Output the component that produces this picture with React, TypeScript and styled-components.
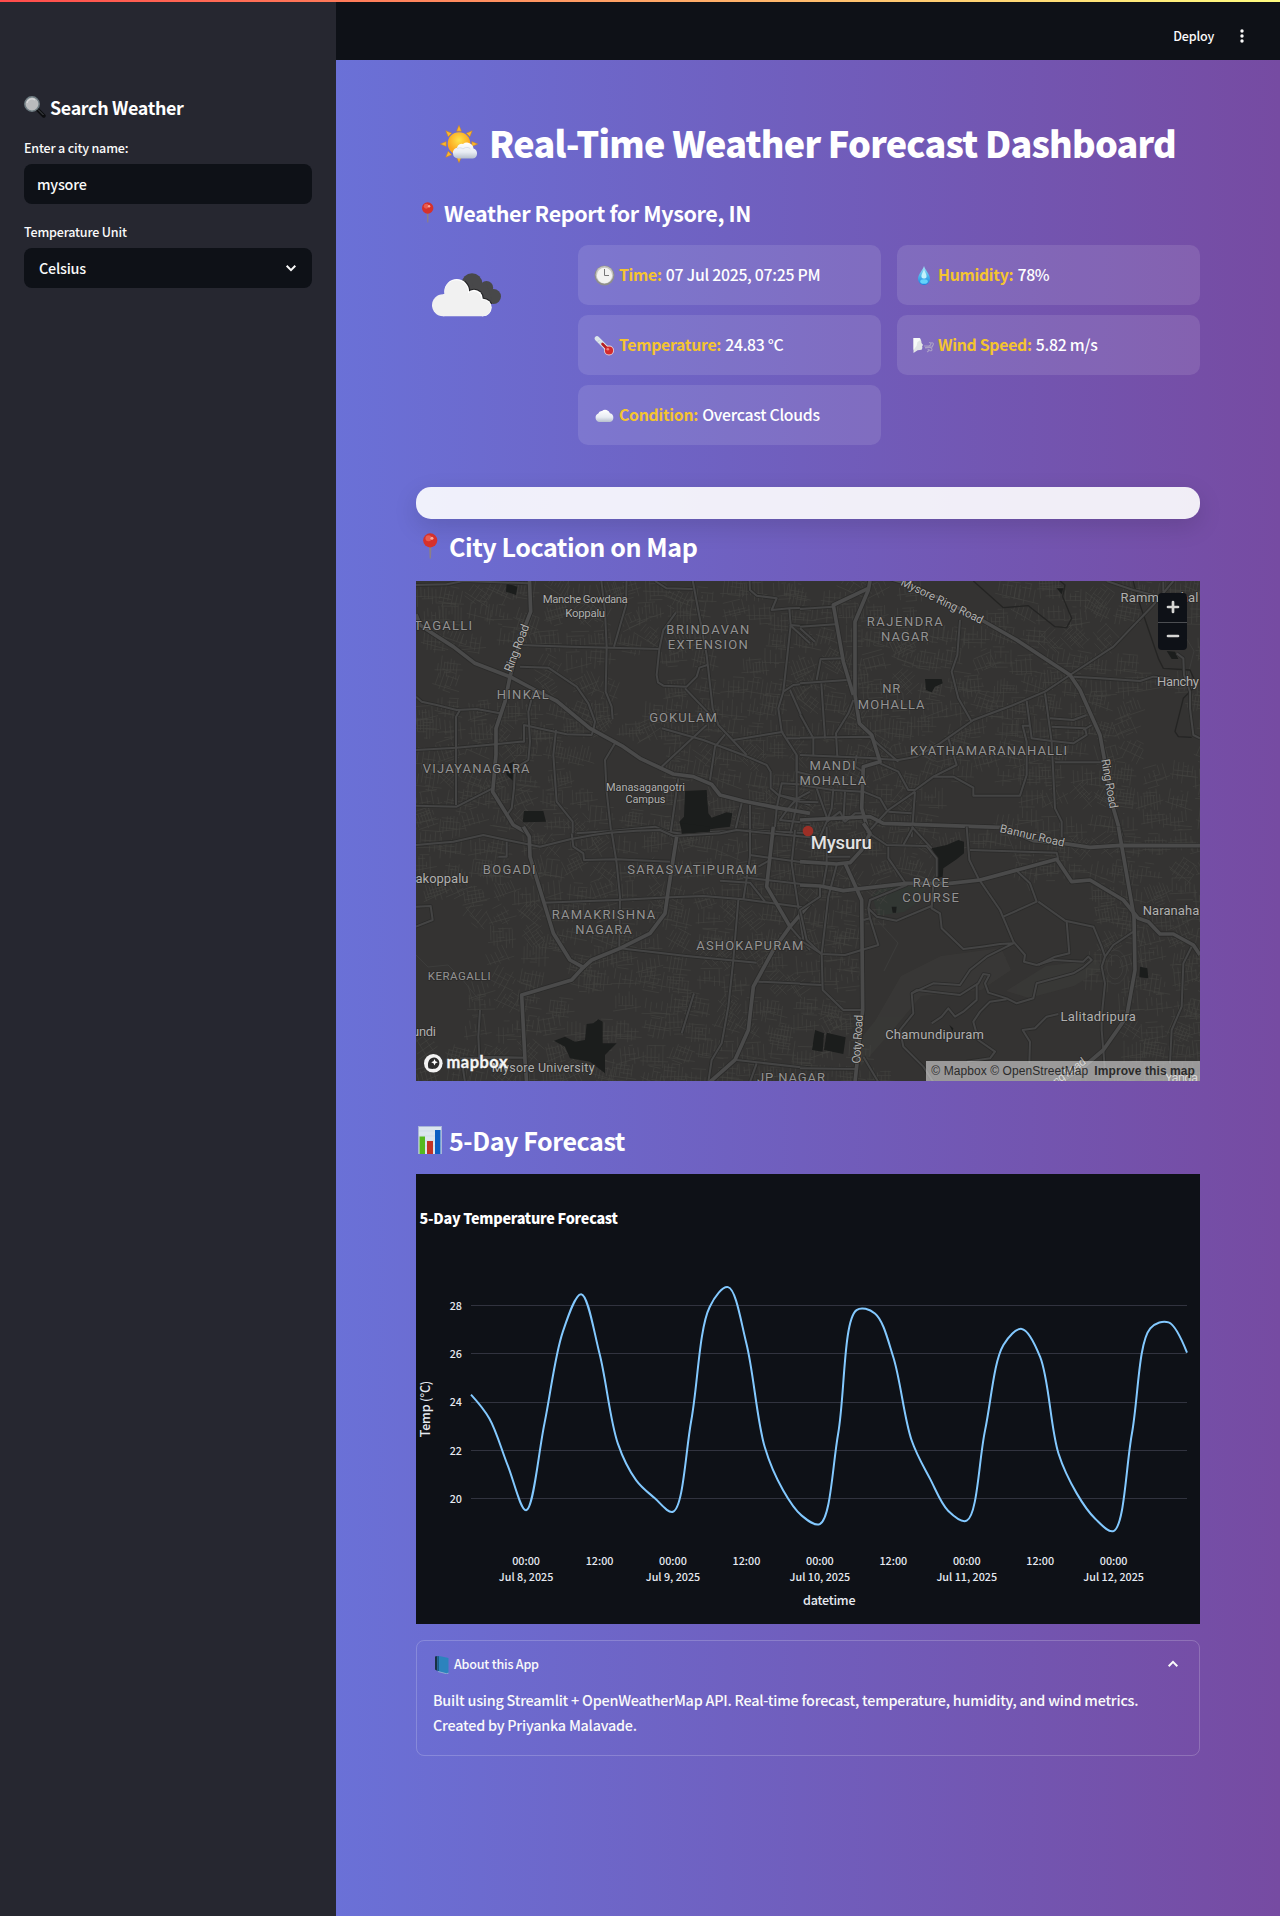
import React from "react";
import styled, { createGlobalStyle } from "styled-components";

const sans = `"Noto Sans CJK SC", "Noto Sans", sans-serif`;

const GlobalStyle = createGlobalStyle`
  *, *::before, *::after { box-sizing: border-box; }
  body { margin: 0; background: #0e1117; font-family: ${sans}; color: #fafafa; }
  h1, h2, h3, p { margin: 0; }
`;

/* ---------- page frame ---------- */

const Page = styled.div`
  position: relative;
  display: flex;
  width: 1280px;
  height: 1916px;
  overflow: hidden;
  background: linear-gradient(to right, #667eea, #764ba2);
  letter-spacing: -0.0135em;
`;
const Decoration = styled.div`
  position: absolute;
  z-index: 2;
  inset: 0 0 auto 0;
  height: 2px;
  background: linear-gradient(to right, #ff4b4b, #fffd80);
`;
const Sidebar = styled.aside`
  display: flex;
  flex-direction: column;
  width: 336px;
  flex: none;
  padding: 94px 24px 0;
  background: #262730;
`;
const SidebarTitle = styled.h3`
  display: flex;
  align-items: flex-start;
  gap: 4px;
  height: 28px;
  font-size: 17.9px;
  font-weight: 700;
  line-height: 26px;
  letter-spacing: -0.019em;
  color: #fff;
`;
const Field = styled.div<{ $top: number }>`
  display: flex;
  flex-direction: column;
  gap: 5px;
  margin-top: ${(p) => p.$top}px;
`;
const FieldLabel = styled.span`
  height: 21px;
  line-height: 19px;
  font-size: 12.55px;
  font-weight: 500;
  letter-spacing: -0.015em;
`;
const FieldBox = styled.div<{ $inset: number }>`
  display: flex;
  align-items: center;
  justify-content: space-between;
  height: 40px;
  padding: 0 14px 0 ${(p) => p.$inset}px;
  border-radius: 8px;
  background: #0e1117;
  font-size: 14.35px;
  font-weight: 500;
  line-height: 24px;
`;
const Content = styled.div`
  display: flex;
  flex-direction: column;
  flex: 1;
  min-width: 0;
`;
const Header = styled.header`
  display: flex;
  align-items: center;
  justify-content: flex-end;
  gap: 20px;
  height: 60px;
  padding: 12px 30px 0 0;
  background: #0e1117;
  font-size: 12.55px;
  font-weight: 500;
`;
const Raised = styled.span`
  padding-bottom: 2px;
`;
const Main = styled.main`
  display: flex;
  flex-direction: column;
  padding: 52px 80px 0;
`;

/* ---------- headings ---------- */

const Glyph = styled.span<{ $top: number; $left?: number }>`
  display: block;
  margin: ${(p) => p.$top}px 0 0 ${(p) => p.$left ?? 0}px;
  line-height: 0;
`;
const Title = styled.h1`
  display: flex;
  align-items: flex-start;
  justify-content: center;
  gap: 10px;
  height: 64px;
  font-size: 36px;
  font-weight: 800;
  line-height: 61px;
  letter-spacing: -0.0215em;
  color: #fff;
  white-space: nowrap;
`;
const Heading = styled.h2<{ $size: number; $height: number; $line: number; $gap: number; $top?: number; $bottom?: number }>`
  display: flex;
  align-items: flex-start;
  gap: ${(p) => p.$gap}px;
  height: ${(p) => p.$height}px;
  margin: ${(p) => p.$top ?? 0}px 0 ${(p) => p.$bottom ?? 0}px;
  font-size: ${(p) => p.$size}px;
  font-weight: 700;
  line-height: ${(p) => p.$line}px;
  letter-spacing: -0.018em;
  color: #fff;
  white-space: nowrap;
`;

/* ---------- weather report ---------- */

const Report = styled.section`
  display: grid;
  grid-template-columns: 146px 303px 303px;
  column-gap: 16px;
  height: 242px;
`;
const IconCell = styled.div`
  padding: 28px 0 0 16px;
`;
const CardColumn = styled.div`
  display: flex;
  flex-direction: column;
  gap: 10px;
`;
const Card = styled.div`
  display: flex;
  align-items: center;
  height: 60px;
  padding: 0 16px;
  border-radius: 10px;
  background: rgba(255, 255, 255, 0.11);
  font-size: 15.8px;
  letter-spacing: -0.0175em;
  white-space: pre;
  color: #fff;
`;
const CardLabel = styled.b`
  margin: 0 4px;
  padding-bottom: 2px;
  color: #f4c430;
  font-weight: 700;
`;
const CardValue = styled.span`
  padding-bottom: 2px;
  font-weight: 500;
`;
const Strip = styled.div`
  height: 32px;
  border-radius: 15px;
  background: rgba(255, 255, 255, 0.9);
  box-shadow: 0 8px 24px rgba(0, 0, 0, 0.13);
`;

/* ---------- map ---------- */

const MapFrame = styled.div`
  position: relative;
  height: 500px;
  overflow: hidden;
  background: #343332;
  letter-spacing: 0;
`;
const ZoomControl = styled.div`
  position: absolute;
  top: 12px;
  right: 13px;
  display: flex;
  flex-direction: column;
  width: 29px;
  border-radius: 4px;
  background: #0e1117;
`;
const ZoomButton = styled.div`
  display: grid;
  place-items: center;
  height: 28.5px;
  & + & { border-top: 1px solid #4c4e52; }
`;
const Attribution = styled.div`
  position: absolute;
  right: 0;
  bottom: 0;
  display: flex;
  gap: 6px;
  height: 20px;
  padding: 0 5px;
  background: rgba(255, 255, 255, 0.5);
  color: #2b2b2b;
  font: 12px/20px "Liberation Sans", sans-serif;
  letter-spacing: 0.08px;
  white-space: nowrap;
`;

/* ---------- chart and expander ---------- */

const ChartFrame = styled.div`
  height: 450px;
  background: #0e1117;
  letter-spacing: 0;
  svg { display: block; }
`;
const Expander = styled.section`
  height: 116px;
  margin-top: 16px;
  padding: 0 16px;
  border: 1px solid rgba(250, 250, 250, 0.2);
  border-radius: 8px;
`;
const ExpanderHead = styled.div`
  display: flex;
  align-items: center;
  height: 46px;
  padding: 0 3px 0 1px;
  gap: 4px;
  font-size: 12.55px;
  font-weight: 500;
  svg:last-child { margin-left: auto; }
`;
const ExpanderBody = styled.p`
  font-size: 14.35px;
  font-weight: 500;
  line-height: 25px;
  white-space: nowrap;
`;

/* ---------- emoji drawings ---------- */

const Magnifier = () => (
  <svg width="22" height="22" viewBox="0 0 22 22">
    <path d="M13.500 13.500l6.300 6.300" stroke="#0d0e10" strokeWidth="3.800" strokeLinecap="round" />
    <path d="M14 13.500l5.500 5.500" stroke="#4a4e53" strokeWidth="1" />
    <circle cx="8" cy="8" r="7.200" fill="#b9bbbd" stroke="#6e7c82" strokeWidth="1.500" />
    <path d="M3 7a5 5 0 0 1 8-3" stroke="#d8dadb" strokeWidth="1.300" fill="none" />
  </svg>
);
const SunCloud = () => (
  <svg width="39" height="38" viewBox="0 0 39 38">
    <defs>
      <radialGradient id="sun" cx="50%" cy="35%"><stop offset="0" stopColor="#ffe34a" /><stop offset="1" stopColor="#fba51e" /></radialGradient>
      <linearGradient id="puff" x1="0" y1="0" x2="0" y2="1"><stop offset="0" stopColor="#fff" /><stop offset=".6" stopColor="#e8ecf3" /><stop offset="1" stopColor="#b6bfcd" /></linearGradient>
    </defs>
    {[0, 45, 90, 135, 180, 225, 270, 315].map((a) => (
      <path key={a} d="M16.500 6.200L19 .3l2.500 5.900z" fill="#fcb52b" stroke="#c98320" strokeWidth=".5" transform={`rotate(${a} 19 19)`} />
    ))}
    <circle cx="19" cy="18.500" r="11.300" fill="url(#sun)" />
    <path d="M18 33.500a5.500 5.500 0 0 1-1-10.800 5 5 0 0 1 6-3.700 6.500 6.500 0 0 1 10.500 4.500 5.200 5.200 0 0 1-.5 10z" fill="url(#puff)" />
    <path d="M17 24c2-2 5-1 6 0 2-2 6-2 7.500 0" stroke="#d3d9e3" strokeWidth=".8" fill="none" />
  </svg>
);
const Pin = ({ size }: { size: number }) => (
  <svg width={size} height={size} viewBox="0 0 24 24">
    <path d="M11 11h2.400l-.5 12.500h-1.200z" fill="#8d7f86" />
    <circle cx="12.200" cy="6.800" r="6.500" fill="#d6312b" />
    <circle cx="10.600" cy="4.800" r="2.800" fill="#ea5c50" />
    <circle cx="13.800" cy="4.800" r="1.400" fill="#f9a79d" />
  </svg>
);
const Bars = () => (
  <svg width="24" height="28" viewBox="0 0 24 28">
    <path d="M0 0h24v28H0z" fill="#a9b6d8" />
    <path d="M1 1h22v27H1z" fill="#dbe6ee" />
    <path d="M1 5h22M1 10h22M1 15h22M1 20h22" stroke="#cbd9e6" strokeWidth=".6" />
    <path d="M1.500 10.500h5.500V28H1.500z" fill="#55b91e" />
    <path d="M9 15h6v13H9z" fill="#c23325" />
    <path d="M17 4h5.500v24H17z" fill="#0a5ec2" />
  </svg>
);
const Clock = () => (
  <svg width="21" height="21" viewBox="0 0 21 21">
    <circle cx="10.500" cy="10.500" r="10" fill="#8e8e8a" />
    <circle cx="10.500" cy="9.800" r="8.900" fill="#c5c5c1" />
    <circle cx="10.500" cy="10.500" r="7.700" fill="#f3f3f1" />
    <path d="M10.500 4v6.500H15" stroke="#777" strokeWidth="1" fill="none" />
  </svg>
);
const Thermometer = () => (
  <svg width="21" height="21" viewBox="0 0 21 21">
    <path d="M3 3.500l11.500 11.500" stroke="#dce6ea" strokeWidth="4.600" strokeLinecap="round" />
    <circle cx="15" cy="15.500" r="5" fill="#e8cfd2" />
    <path d="M8.500 9l6.500 6.500" stroke="#b51e22" strokeWidth="2.600" strokeLinecap="round" />
    <circle cx="15" cy="15.500" r="4.100" fill="#d42a2c" />
    <circle cx="13.800" cy="14.300" r="1.300" fill="#f08179" />
    <path d="M4 6.500l1-1M6 8.500l1-1" stroke="#8ea0a8" strokeWidth=".7" />
  </svg>
);
const Cloud = () => (
  <svg width="21" height="21" viewBox="0 0 21 21">
    <path d="M5 17a4.500 4.500 0 0 1-.7-8.500A3.500 3.500 0 0 1 8 5.900a5.200 5.200 0 0 1 8 2.400A4.500 4.500 0 0 1 16 17z" fill="url(#puff)" />
  </svg>
);
const Drop = () => (
  <svg width="21" height="21" viewBox="0 0 21 21">
    <defs><linearGradient id="drop" x1="0" y1="0" x2="0" y2="1"><stop offset="0" stopColor="#a6e5f7" /><stop offset=".55" stopColor="#49b5ec" /><stop offset="1" stopColor="#1b7fe0" /></linearGradient></defs>
    <path d="M11 1c1 4 6 8 6 13a6 6 0 0 1-12 0c0-5 5-9 6-13z" fill="url(#drop)" />
    <path d="M11 4c.5 3 3 5 2.500 8-.5 2-4.500 2-5 0-.5-3 2-5 2.500-8z" fill="#c4f2fb" />
    <ellipse cx="11" cy="16.500" rx="3.800" ry="2.300" fill="#64d3fa" />
  </svg>
);
const WindFace = () => (
  <svg width="21" height="21" viewBox="0 0 21 21">
    <path d="M.5 3h6.500l1.300 3 .2 2 1.600 2-1 1 .3 2-.8 1.800-4 .4L.5 18z" fill="#e3e6e6" />
    <path d="M.5 3h6l1 2-3 2-1 4-3 4z" fill="#f8faf9" />
    <path d="M11 11h5c3-1 2-4 0-3.500M12 13c4-1 7-1 7 1.500 0 2-3 1.500-2.500 0M12 12.500l8-.8M15 14c1 2 0 3-1 2.500M18 8c3-1 3 2 1 3" stroke="#aaa0c6" strokeWidth="1.100" fill="none" />
  </svg>
);
const Book = () => (
  <svg width="16" height="19" viewBox="0 0 16 19">
    <path d="M1 1.500L3.500 1v15L1 14.500z" fill="#173143" />
    <path d="M3.500 1l3 .2L14.500 3v15l-2.500.5-8.500-2.500z" fill="#2c83bd" />
    <path d="M3.500 1L5 1.300v15L3.500 16z" fill="#1b5c8a" />
    <path d="M4 16.500l8.500 2.200 2-.6" stroke="#a4c4d3" strokeWidth=".7" fill="none" />
  </svg>
);
const BrokenClouds = () => (
  <svg width="70" height="44" viewBox="0 0 70 44">
    <defs><clipPath id="rim"><path d="M33 5h27v26H33z" /></clipPath></defs>
    <g fill="#48484a">
      <circle cx="40" cy="10.500" r="10.300" /><circle cx="54.500" cy="14.700" r="6.700" /><circle cx="61.500" cy="23.500" r="7.500" />
      <path d="M40 10h14l7 20H48z" />
    </g>
    <g fill="#232325" clipPath="url(#rim)">
      <circle cx="24.700" cy="18.500" r="13.600" /><circle cx="42" cy="25.500" r="9.800" /><circle cx="51" cy="34.500" r="9.800" />
    </g>
    <g fill="#fff">
      <circle cx="24.700" cy="18.500" r="12.400" /><circle cx="42" cy="25.500" r="8.700" /><circle cx="51" cy="34.500" r="8.700" />
    </g>
    <g fill="#f1f1f1">
      <circle cx="24.300" cy="19" r="11.800" /><circle cx="41.500" cy="26.200" r="8" /><circle cx="50.800" cy="35" r="8.200" /><circle cx="11" cy="32.300" r="11" />
      <path d="M11 21.300l20-4 12 10 8 16H11z" />
    </g>
  </svg>
);
const Chevron = ({ up }: { up?: boolean }) => (
  <svg width="14" height="14" viewBox="0 0 14 14">
    <path d={up ? "M2.700 9.200L7 4.900l4.300 4.300" : "M2.700 4.800L7 9.100l4.300-4.300"} fill="none" stroke="#fafafa" strokeWidth="2" />
  </svg>
);
const Kebab = () => (
  <svg width="16" height="16" viewBox="0 0 16 16" fill="#fafafa">
    <circle cx="8" cy="3" r="1.700" /><circle cx="8" cy="8" r="1.700" /><circle cx="8" cy="13" r="1.700" />
  </svg>
);

/* ---------- map data: four tiles at three units per pixel ---------- */

type Tile = { x: number; y: number; major: string[]; minor: string[]; water: string[]; edge?: string[] };

const tiles: Tile[] = [
  {
    x: -6, y: -6,
    major: [
      "18,118 30,150 75,180 130,215 195,265 300,305 375,345 440,378 540,460 640,515 690,550 790,597 850,605 905,628 930,660 1000,678 1100,698 1200,715",
      "358,0 362,110 335,180 300,305 285,380 258,460 258,540 248,650 310,750 345,770 360,786",
    ],
    minor: [
      "330,210 480,215 750,222", "572,0 585,110 590,215 587,350 605,395 608,432", "650,0 648,90 612,215",
      "798,112 760,165 748,222 740,300 744,322 760,332 830,335 860,305 868,278 892,270",
      "845,0 890,240 908,400 925,450 1010,540", "825,340 925,445",
      "330,275 415,278 500,335 535,385 555,440 550,465",
      "755,460 880,495 1000,540 1070,570 1082,590 1082,640 1105,660 1200,680", "890,450 755,575",
      "945,478 915,515 900,615", "970,495 1060,480 1120,470",
      "1200,325 1150,330 1120,350 1105,400 1115,470 1160,540 1160,590 1200,600", "1160,540 1160,690 1140,780",
      "1120,350 1130,260 1142,150 1138,100", "1142,150 1200,155", "1140,150 1200,205", "1140,345 1200,480", "1130,490 1200,490",
      "1018,0 1020,45 1040,62 1100,70 1085,105 1138,100 1200,98", "735,18 770,40 848,42",
      "18,365 35,380 80,390 140,405 200,402 270,415",
      "18,525 140,518 255,508 330,500 342,500 342,450 410,465 470,478 545,480 550,465",
      "150,405 138,425 138,690", "18,692 140,695 248,640",
      "370,350 355,410 360,500 355,555 315,580 312,640 305,700 290,720",
      "438,465 430,540 440,680 488,740 488,786", "615,505 585,555 590,650 605,786",
      "500,775 600,768 735,755 770,770 818,776 1000,765 1200,775", "805,610 780,786",
      "995,685 975,770", "1020,690 1020,786", "1200,630 1115,625 1100,700 1092,786", "1105,660 1200,690",
      "18,30 110,28 160,18 355,25", "1200,650 1160,672 1135,700 1110,735 1200,745",
    ],
    water: [
      "290,25 322,35 318,60 288,50", "285,570 312,560 312,620 290,600", "342,708 400,708 408,740 338,742",
      "825,648 890,645 895,715 905,728 950,712 967,715 960,755 920,760 818,776 808,740 822,725",
    ],
  },
  {
    x: 384, y: -6,
    major: [
      "270,10 320,25 420,70 550,138 650,195 810,300 840,345 900,480 940,700 965,786",
      "210,18 205,45 165,140 165,360 178,445 215,480 240,560 190,575 185,700 210,786",
      "205,40 100,90 130,260 160,360", "0,735 210,725 250,745 600,757",
    ],
    minor: [
      "1120,18 1060,90 940,215 810,300 735,350 640,390 520,435 420,505 350,545 295,555 210,550",
      "0,102 100,95", "0,155 105,148", "0,160 45,200", "0,325 140,315", "64,325 75,490", "50,315 62,252 125,250",
      "160,375 145,415 108,475 112,545", "0,418 40,490 40,540", "0,488 210,485 260,530 295,560", "0,540 230,550",
      "240,565 295,590 325,645 345,645 400,605 460,605 520,638 520,662 660,662 680,600 680,500 668,452 690,452",
      "345,650 335,786", "345,650 265,705 210,765", "265,710 335,715",
      "480,135 472,240 455,290 475,370 515,440", "735,355 755,500 765,700 785,740 785,786",
      "680,378 695,490 755,498 820,505 860,480 855,460 755,455", "750,430 820,435 860,420", "850,465 875,450",
      "445,490 470,570 400,605", "765,562 910,562", "820,305 900,310 1020,318 1060,305 1110,310",
      "1130,235 1150,250 1152,300 1170,350 1170,400 1180,480 1200,490", "920,18 1000,45 1060,60", "1090,20 1090,50",
      "0,630 100,645 190,650 240,670 260,705", "0,680 55,682", "50,640 85,740", "100,640 95,700 80,740 60,786",
      "80,740 120,710 135,740 165,715 185,715", "135,650 130,740", "170,540 165,575 190,590",
    ],
    edge: [
      "520,18 610,98 685,92 765,155 800,158 815,130 788,65 795,30 780,18",
      "1000,18 1010,60 1075,250 1090,280 1170,285 1190,330 1150,370 1125,470 1135,485 1175,487",
    ],
    water: ["375,312 425,312 428,325 405,335 395,352 378,345", "770,40 790,40 785,58", "1100,228 1125,230 1135,252 1115,252"],
  },
  {
    x: -6, y: 249,
    major: [
      "340,-10 358,20 360,80 375,130 430,310 480,390 520,412 485,450 335,495 345,690 350,760",
      "520,412 545,390 630,355 720,310 765,250 775,180 800,20",
      "1200,220 1140,290 1090,360 1030,470 1015,600 975,690 900,756", "1090,-10 1070,170 1140,290",
    ],
    minor: [
      "18,45 130,35 220,15 290,30 390,50 480,28 550,15 600,8 680,2 750,0 790,18 930,10 980,0 1200,22",
      "400,218 620,210 780,202 880,198 1000,208 1180,232", "630,355 830,378 1040,398",
      "605,5 620,100 630,200 628,350", "485,10 490,50 520,70 522,90 620,88 780,95", "930,152 1020,158 1065,215",
      "1020,75 1200,100", "1000,142 1200,165", "1020,0 1020,80 1000,210", "985,210 970,390 955,530 935,640 905,690 895,756",
      "1140,290 1200,360", "1045,455 1200,462", "980,690 1200,715", "1040,700 1020,756", "1155,0 1145,100 1180,330",
      "210,540 205,620 208,680 345,683 150,685", "18,230 62,228 68,270 18,290", "852,490 815,610", "155,690 165,756",
      "290,35 290,80 265,80", "1080,90 1045,110",
    ],
    water: ["432,632 465,620 495,635 525,630 530,582 550,580 565,568 578,575 578,640 620,640 585,675 585,730 540,695 480,685 465,650", "815,-20 900,-10 900,5 815,12"],
  },
  {
    x: 384, y: 249,
    major: [
      "0,95 110,102 150,98 185,60 210,10 190,-20", "135,100 185,210 188,540 165,756",
      "0,165 60,168 130,182 320,160 450,160 540,150 770,88 815,155 870,150 970,210 1015,265 1045,275 1080,312 1120,312 1180,345 1200,375",
      "600,-10 700,32 790,40 870,52 960,46 1200,47", "955,-10 1002,260 1005,420 980,560 910,660 840,720 780,756",
    ],
    minor: [
      "200,5 260,45 380,48 410,85 410,140", "265,50 265,85 320,165 210,210 205,235 210,265 190,270", "335,-10 395,55", "340,-10 310,45",
      "500,-10 508,90 535,145 600,240 640,335 675,375 672,395 710,405 760,390 850,395 865,380 875,390 850,412 820,430 710,460 700,505 650,520 620,505 565,488 555,460 568,435 550,432 535,460 480,495 350,480 335,490 340,550 300,600 310,650 370,710 400,756",
      "400,160 395,235 420,250 425,295 490,357 545,350 600,342 640,340 560,380 510,420 480,465 400,460 335,490",
      "205,235 230,260 290,272 395,228", "210,265 235,345 135,375 65,372 0,330", "110,105 85,200 65,372 68,480 130,540 185,540",
      "650,122 690,160 710,215 610,260", "715,215 795,272 880,290 905,350 915,380 905,410 915,460 905,560 905,600 915,720",
      "800,275 808,370 765,380 715,405", "1000,305 940,345 915,380", "510,60 770,68 775,88",
      "530,465 530,510 490,545 465,560 445,535 425,560 395,580", "620,508 570,515 540,545 520,575 535,630 585,665 570,685 500,695",
      "775,552 740,560 705,595 668,600 690,635 688,700", "1175,350 1150,400 1145,530 1115,600 1110,700", "0,715 165,717", "0,462 65,465",
      "190,680 235,756", "60,170 60,200 0,240 20,330 65,372", "80,80 150,80", "80,-10 80,110 70,165",
    ],
    water: [
      "395,55 440,45 475,30 492,35 492,70 470,88 430,115 428,140 410,145 412,90", "45,600 72,610 68,665 36,660",
      "80,608 137,622 130,672 72,660", "275,230 290,230 288,248 278,248", "1020,410 1042,415 1045,445 1018,442", "448,585 460,595 458,605",
    ],
  },
];

/* Residential street texture, laid down in small rotated blocks. */
const openLand = [
  [90, 90, 30], [225, 100, 34], [205, 195, 44], [24, 175, 0], [10, 90, 22], [170, 425, 20], [25, 370, 46], [25, 440, 30],
  [545, 20, 32], [505, 340, 34], [560, 310, 50], [590, 430, 90], [520, 420, 90], [640, 350, 50], [660, 450, 50], [610, 480, 50],
  [740, 60, 34], [755, 150, 30], [340, 400, 20], [560, 225, 30], [140, 390, 22], [320, 60, 26], [400, 170, 14], [230, 20, 0], [720, 230, 16],
];
const streets = (() => {
  let s = 20250707;
  const rnd = () => ((s = (s * 1664525 + 1013904223) >>> 0) / 4294967296);
  let d = "";
  for (let by = 0; by < 500; by += 23) {
    for (let bx = 0; bx < 784; bx += 25) {
      const cx = bx + 6 + rnd() * 14, cy = by + 6 + rnd() * 12;
      if (openLand.some(([x, y, r]) => Math.hypot(cx - x, cy - y) < r)) continue;
      const a = (rnd() < 0.6 ? rnd() * 0.3 - 0.1 : rnd() * 1.5 - 0.5), c = Math.cos(a), n = Math.sin(a);
      const seg = (x1: number, y1: number, x2: number, y2: number) => {
        d += `M${(cx + x1 * c - y1 * n).toFixed(1)} ${(cy + x1 * n + y1 * c).toFixed(1)}L${(cx + x2 * c - y2 * n).toFixed(1)} ${(cy + x2 * n + y2 * c).toFixed(1)}`;
      };
      const gap = 3 + rnd() * 2.5;
      for (let k = -11; k <= 11; k += gap) {
        seg(k, -3 - rnd() * 9, k, rnd() * 12);
        if (rnd() < 0.55) seg(-12 * rnd(), k, 12 * rnd(), k);
      }
      seg(-14, rnd() * 8, 14, rnd() * 8);
    }
  }
  return d;
})();

/* text, centre x, baseline y, width, size, rotation */
type Label = [string, number, number, number, number, number?];
const labels: Label[] = [
  ["Manche Gowdana", 169.8, 23, 85, 11.5], ["Koppalu", 169.7, 37, 40, 11.5],
  ["Manasagangotri", 230, 211, 79, 11], ["Campus", 230, 223, 40, 11],
  ["Rammanahal", 744, 22, 78, 13], ["Hanchy", 762.5, 106, 42, 13], ["akoppalu", 26.500, 302.700, 53, 13], ["undi", 8.500, 455.700, 24, 13],
  ["Mysore University", 127.700, 491.700, 102.700, 12.5], ["Naranaha", 755.500, 335, 56.500, 13],
  ["Chamundipuram", 519, 459, 98.700, 13], ["Lalitadripura", 682.700, 441, 75.300, 13], ["Yanda", 766, 502, 33, 13],
  ["Ring Road", 105, 69, 50, 12, -69], ["Mysore Ring Road", 525, 24, 90, 11.5, 26], ["Ring Road", 690, 204, 50, 12, 80],
  ["Bannur Road", 616, 259, 66, 11.5, 13], ["Ooty Road", 446, 459, 49, 12, -87], ["ng Road", 656, 494, 38, 11.5, -36],
];
const districts: Label[] = [
  ["TAGALLI", 27.500, 50, 58, 13], ["BRINDAVAN", 292.300, 53.300, 83, 13], ["EXTENSION", 292.300, 68.300, 80, 13], ["HINKAL", 107.300, 119, 52, 13],
  ["GOKULAM", 267.500, 142, 67.700, 13], ["VIJAYANAGARA", 60.700, 192.300, 106.700, 13], ["RAJENDRA", 489.300, 45.300, 76, 13], ["NAGAR", 489.300, 60.700, 47.500, 13],
  ["NR", 475.700, 112.700, 18, 13], ["MOHALLA", 475.700, 128.300, 66.700, 13], ["KYATHAMARANAHALLI", 573, 174.700, 157, 13],
  ["MANDI", 417, 189.300, 46, 13], ["MOHALLA", 417.300, 204.300, 66.700, 13], ["BOGADI", 93.700, 293.300, 52.700, 13],
  ["SARASVATIPURAM", 276.500, 293.300, 129.700, 13], ["RAMAKRISHNA", 188, 339, 103.700, 13], ["NAGARA", 188, 354, 56.700, 13],
  ["ASHOKAPURAM", 334.300, 370, 107, 13], ["KERAGALLI", 43.700, 400, 62.700, 11.5], ["JP NAGAR", 375.500, 502, 68, 13],
  ["RACE", 515.300, 306.700, 36, 13], ["COURSE", 515, 322, 56.700, 13],
];

const MapText = styled.text<{ $tone: string }>`
  font-family: Roboto, sans-serif;
  fill: ${(p) => p.$tone};
  stroke: #2b2a29;
  stroke-width: 1.6px;
  stroke-linejoin: round;
  paint-order: stroke;
  text-anchor: middle;
`;
const renderLabel = (tone: string) => ([t, x, y, w, size, rot]: Label, i: number) => (
  <MapText key={t + i} $tone={tone} x={x} y={y} fontSize={size} textLength={w} transform={rot ? `rotate(${rot} ${x} ${y})` : undefined}>{t}</MapText>
);

const CityMap = () => (
  <MapFrame>
    <svg width="784" height="500" viewBox="0 0 784 500">
      <g fill="#3a3937" opacity=".8">
        <path d="M485 395l40-20 60-8 10 22-30 20-60 6-25 30-35 40-6-20 20-25z" />
        <path d="M590 410l40-25 50-6 8 8-30 18-45 12z" />
        <path d="M575 372l15 4-15 25-30 10z" />
      </g>
      <path d="M456 315l14-12 40-4-2 18-20 14-26 4z" fill="#323733" />
      <path d={streets} fill="none" stroke="#42423f" strokeWidth=".65" />
      <g fill="none" stroke="#3f3f3e" strokeWidth=".8">
        <ellipse cx="699" cy="386" rx="8" ry="12" /><ellipse cx="699" cy="386" rx="12" ry="17" />
        <path d="M0 374l12 12 20-2 14 14 18 22v36M462 340l20 22-14 28M590 250l24 60M760 40l18 30-10 40" />
      </g>
      {tiles.map((t, i) => (
        <g key={i} transform={`translate(${t.x} ${t.y}) scale(.33333)`} fill="none" strokeLinejoin="round">
          {t.edge?.map((p) => <polyline key={p} points={p} stroke="#242423" strokeWidth="4" />)}
          {t.water.map((p) => <polygon key={p} points={p} fill="#1b1d1c" />)}
          {t.minor.map((p) => <polyline key={p} points={p} stroke="#2b2b2a" strokeWidth="11" />)}
          {t.major.map((p) => <polyline key={p} points={p} stroke="#2b2b2a" strokeWidth="16" />)}
          {t.minor.map((p) => <polyline key={p + "f"} points={p} stroke="#444444" strokeWidth="6" />)}
          {t.major.map((p) => <polyline key={p + "f"} points={p} stroke="#4a4a4a" strokeWidth="11" />)}
        </g>
      ))}
      <g transform="translate(-.5 -.6)">
        {districts.map(renderLabel("#939393"))}
        {labels.map(renderLabel("#b0b0af"))}
      </g>
      <circle cx="392" cy="250" r="5.300" fill="#9c2f26" />
      <MapText $tone="#e2e2e2" x="425.200" y="268.300" fontSize="18.500" fontWeight="500" textLength="61">Mysuru</MapText>
      <circle cx="17.300" cy="482.300" r="9.300" fill="#f3f3f3" />
      <path d="M12.500 487.300c-2-7 2-11 5.800-10.800 7.500 1 6 11 0 11.300-2 .2-4 0-5.800-.5z" fill="#2c2c2c" />
      <path d="M18.500 478l1 2.300 2.300 1-2.300 1-1 2.300-1-2.300-2.300-1 2.300-1z" fill="#fff" />
      <text x="30.500" y="486.800" fontFamily="Lato, sans-serif" fontSize="16.500" fontWeight="700" fill="#f5f5f5" stroke="#f5f5f5" strokeWidth=".3" textLength="61">mapbox</text>
    </svg>
    <ZoomControl>
      {["M7 2v10M2 7h10", "M2 7h10"].map((d) => (
        <ZoomButton key={d}>
          <svg width="14" height="14" viewBox="0 0 14 14"><path d={d} stroke="#d6d6d4" strokeWidth="2.700" strokeLinecap="round" /></svg>
        </ZoomButton>
      ))}
    </ZoomControl>
    <Attribution><span>© Mapbox © OpenStreetMap</span><b>Improve this map</b></Attribution>
  </MapFrame>
);

/* ---------- forecast chart ---------- */

const temps = [
  24.31, 23.32, 21.38, 19.52, 23.11, 26.91, 28.47, 26.01, 22.28, 20.76, 20.03, 19.46, 23.25, 27.94, 28.76, 26.43, 22.14, 20.35, 19.31, 18.95,
  22.7, 27.81, 27.67, 25.87, 22.42, 20.83, 19.49, 19.09, 22.83, 26.36, 27.03, 25.87, 21.87, 20.21, 19.17, 18.66, 22.7, 27.05, 27.3, 26.05,
];
const yOf = (t: number) => 131.5 + (28 - t) * 24.15;
const pts = temps.map((t, i) => [55 + (i * 716) / 39, yOf(t)]);

/* Open spline with centripetal tangents. */
const curve = (() => {
  const tangent = (a: number[], b: number[], c: number[]) => {
    const d1 = Math.pow(Math.hypot(a[0] - b[0], a[1] - b[1]), 0.5);
    const d2 = Math.pow(Math.hypot(c[0] - b[0], c[1] - b[1]), 0.5);
    const n = [0, 1].map((k) => d2 * d2 * (a[k] - b[k]) - d1 * d1 * (c[k] - b[k]));
    const p = 3 * d2 * (d1 + d2), q = 3 * d1 * (d1 + d2);
    return [[b[0] + n[0] / p, b[1] + n[1] / p], [b[0] - n[0] / q, b[1] - n[1] / q]];
  };
  const tg = pts.slice(1, -1).map((_, i) => tangent(pts[i], pts[i + 1], pts[i + 2]));
  let d = `M${pts[0]}Q${tg[0][0]} ${pts[1]}`;
  for (let i = 2; i < pts.length - 1; i++) d += `C${tg[i - 2][1]} ${tg[i - 1][0]} ${pts[i]}`;
  return d + `Q${tg[tg.length - 1][1]} ${pts[pts.length - 1]}`;
})();

const ChartText = styled.text<{ $size?: number; $weight?: number; $anchor?: string }>`
  font-family: ${sans};
  font-size: ${(p) => p.$size ?? 10.75}px;
  font-weight: ${(p) => p.$weight ?? 500};
  fill: ${(p) => (p.$weight ? "#fff" : "#e6eaf1")};
  text-anchor: ${(p) => p.$anchor ?? "middle"};
`;

const ForecastChart = () => (
  <ChartFrame>
    <svg width="784" height="450" viewBox="0 0 784 450">
      <ChartText x="3.500" y="50.300" $size={14.35} $weight={900} $anchor="start" textLength="198.500">5-Day Temperature Forecast</ChartText>
      {[28, 26, 24, 22, 20].map((t) => (
        <g key={t}>
          <path d={`M55 ${Math.floor(yOf(t)) + 0.5}h716`} stroke="#31333f" />
          <ChartText x="46" y={yOf(t) + 4.3} $anchor="end">{t}</ChartText>
        </g>
      ))}
      <path d={curve} fill="none" stroke="#83c9ff" strokeWidth="2" />
      {Array.from({ length: 9 }, (_, i) => {
        const x = 110.1 + i * 73.44;
        return (
          <g key={i}>
            <ChartText x={x} y="391">{i % 2 ? "12:00" : "00:00"}</ChartText>
            {i % 2 === 0 && <ChartText x={x} y="407">{`Jul ${8 + i / 2}, 2025`}</ChartText>}
          </g>
        );
      })}
      <ChartText x="413.300" y="431" $size={12.55} textLength="52.500">datetime</ChartText>
      <ChartText transform="translate(14 235) rotate(-90)" $size={12.55} textLength="56.500">Temp (°C)</ChartText>
    </svg>
  </ChartFrame>
);

/* ---------- app ---------- */

const WeatherCard = ({ icon, label, value }: { icon: React.ReactNode; label: string; value: string }) => (
  <Card>{icon}<CardLabel>{label}:</CardLabel><CardValue>{value}</CardValue></Card>
);

export default function App() {
  return (
    <Page>
      <GlobalStyle />
      <Decoration />
      <Sidebar>
        <SidebarTitle><Glyph $top={2}><Magnifier /></Glyph>Search Weather</SidebarTitle>
        <Field $top={16}>
          <FieldLabel>Enter a city name:</FieldLabel>
          <FieldBox $inset={13}>mysore</FieldBox>
        </Field>
        <Field $top={18}>
          <FieldLabel>Temperature Unit</FieldLabel>
          <FieldBox $inset={15}>Celsius<Chevron /></FieldBox>
        </Field>
      </Sidebar>
      <Content>
        <Header><Raised>Deploy</Raised><Kebab /></Header>
        <Main>
          <Title><Glyph $top={13}><SunCloud /></Glyph>Real-Time Weather Forecast Dashboard</Title>
          <Heading $size={21.5} $height={34} $line={32} $gap={6} $top={21} $bottom={14}>
            <Glyph $top={5} $left={1}><Pin size={21} /></Glyph>Weather Report for Mysore, IN
          </Heading>
          <Report>
            <IconCell><BrokenClouds /></IconCell>
            <CardColumn>
              <WeatherCard icon={<Clock />} label="Time" value="07 Jul 2025, 07:25 PM" />
              <WeatherCard icon={<Thermometer />} label="Temperature" value="24.83 °C" />
              <WeatherCard icon={<Cloud />} label="Condition" value="Overcast Clouds" />
            </CardColumn>
            <CardColumn>
              <WeatherCard icon={<Drop />} label="Humidity" value="78%" />
              <WeatherCard icon={<WindFace />} label="Wind Speed" value="5.82 m/s" />
            </CardColumn>
          </Report>
          <Strip />
          <Heading $size={25.1} $height={62} $line={55} $gap={6}>
            <Glyph $top={14} $left={1}><Pin size={26} /></Glyph>City Location on Map
          </Heading>
          <CityMap />
          <Heading $size={25.1} $height={62} $line={56} $gap={7} $top={31}>
            <Glyph $top={14} $left={2}><Bars /></Glyph>5-Day Forecast
          </Heading>
          <ForecastChart />
          <Expander>
            <ExpanderHead><Book /><Raised>About this App</Raised><Chevron up /></ExpanderHead>
            <ExpanderBody>
              Built using Streamlit + OpenWeatherMap API. Real-time forecast, temperature, humidity, and wind metrics.
              <br />
              Created by Priyanka Malavade.
            </ExpanderBody>
          </Expander>
        </Main>
      </Content>
    </Page>
  );
}
